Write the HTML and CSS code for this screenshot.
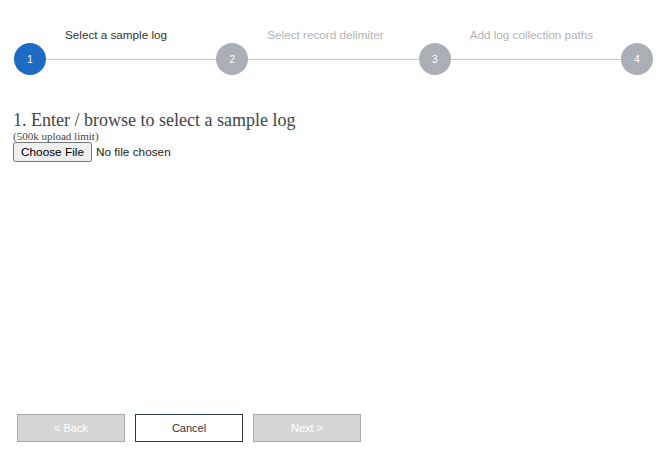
FILE: index.html
```html
<!DOCTYPE html>
<html>
<head>
<meta charset="utf-8">
<link rel="stylesheet" href="styles.css">
</head>
<body>
<div class="page">
  <div class="stepper">
    <div class="label active l1">Select a sample log</div>
    <div class="label l2">Select record delimiter</div>
    <div class="label l3">Add log collection paths</div>
    <div class="circle current">1</div>
    <div class="line"></div>
    <div class="circle">2</div>
    <div class="line"></div>
    <div class="circle">3</div>
    <div class="line"></div>
    <div class="circle">4</div>
  </div>
  <div class="content">
    <h2 class="title">1. Enter / browse to select a sample log</h2>
    <div class="limit">(500k upload limit)</div>
    <input class="file" type="file">
  </div>
  <div class="footer">
    <button class="btn disabled">&lt; Back</button>
    <button class="btn cancel">Cancel</button>
    <button class="btn disabled">Next &gt;</button>
  </div>
</div>
</body>
</html>
```
FILE: styles.css
```css
html, body {
  margin: 0;
  padding: 0;
  background: #fff;
}
.page {
  height: 453px;
  display: flex;
  flex-direction: column;
  font-family: "Liberation Sans", Arial, sans-serif;
}
.stepper {
  display: grid;
  grid-template-columns: 32px 1fr 32px 1fr 32px 1fr 32px;
  grid-template-rows: 16px 32px;
  row-gap: 0;
  padding: 27px 15px 0 14px;
}
.label {
  grid-row: 1;
  font-size: 11.7px;
  line-height: 16px;
  color: #b3b3b3;
  padding-left: 19px;
  white-space: nowrap;
}
.label.active { color: #333; }
.l1 { grid-column: 2; }
.l2 { grid-column: 4; }
.l3 { grid-column: 6; }
.circle {
  grid-row: 2;
  width: 32px;
  height: 32px;
  border-radius: 50%;
  background: #aaaeb5;
  color: #fff;
  font-size: 10px;
  display: flex;
  align-items: center;
  justify-content: center;
}
.circle.current { background: #1e6bc4; }
.line {
  grid-row: 2;
  align-self: center;
  height: 1px;
  background: #c8c8c8;
}
.content {
  padding: 0 13px;
}
.title {
  font-family: "Liberation Serif", "Times New Roman", serif;
  font-weight: normal;
  font-size: 18px;
  line-height: 20px;
  color: #444;
  margin: 35px 0 0 0;
}
.limit {
  font-family: "Liberation Serif", "Times New Roman", serif;
  font-size: 11px;
  line-height: 12px;
  color: #444;
  margin-top: 0;
}
.file {
  font-family: "Liberation Sans", Arial, sans-serif;
  font-size: 11.8px;
  margin: 0;
  color: #222;
}
.footer {
  margin-top: auto;
  display: flex;
  gap: 10px;
  padding: 0 0 11px 17px;
}
.btn {
  width: 108px;
  height: 28px;
  font-family: "Liberation Sans", Arial, sans-serif;
  font-size: 11px;
  border-radius: 0;
  padding: 0;
}
.btn.disabled {
  background: #d6d6d6;
  border: 1px solid #ababab;
  color: #fff;
}
.btn.cancel {
  background: #fff;
  border: 1px solid #2d3a4b;
  color: #333;
}
```
